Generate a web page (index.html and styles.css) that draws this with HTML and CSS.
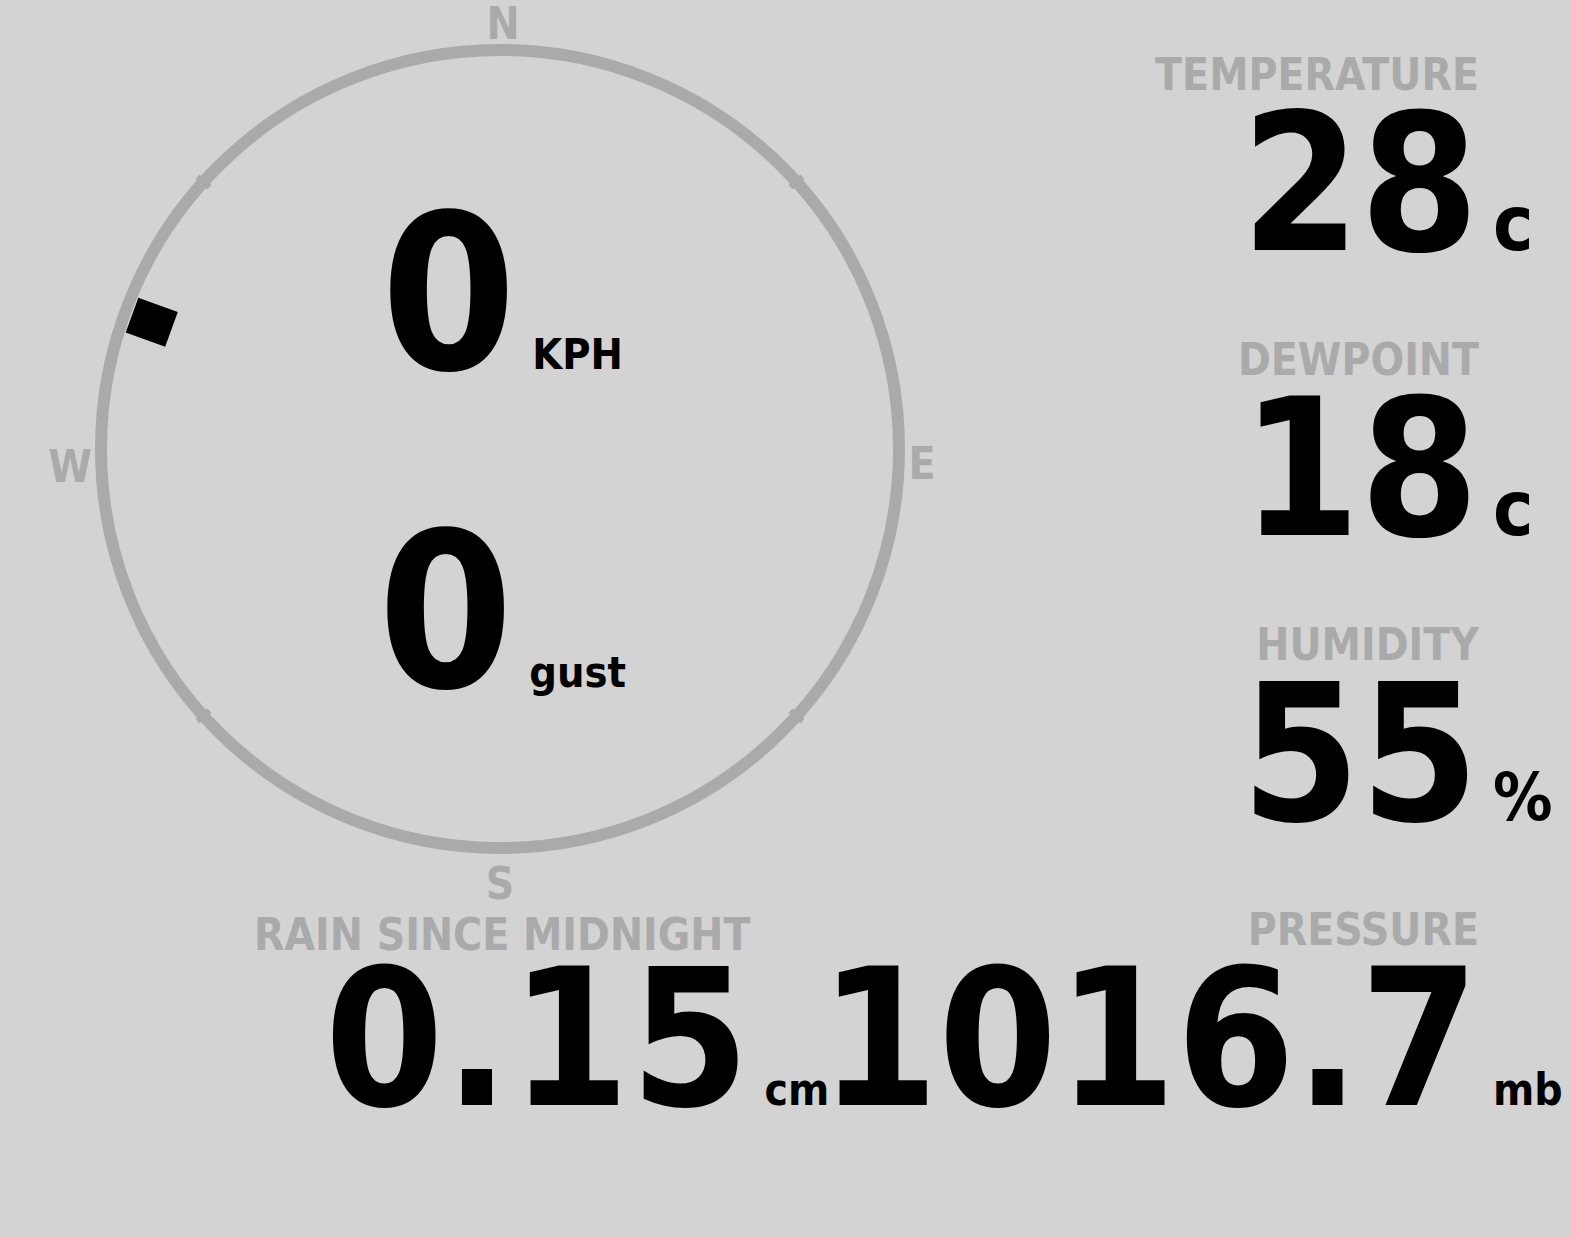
FILE: index.html
```html
<!DOCTYPE html>
<html lang="en">
<head>
<meta charset="utf-8">
<title>Weather</title>
<link rel="stylesheet" href="styles.css">
</head>
<body>
<div class="page">
  <div class="top">
    <div class="compass">
      <svg class="dial" width="1000" height="908" viewBox="0 0 1000 908">
        <circle cx="500" cy="449" r="399" fill="none" stroke="#aaaaaa" stroke-width="12"/>
        <g stroke="#aaaaaa" stroke-width="6">
          <line x1="500" y1="42" x2="500" y2="58" transform="rotate(48 500 449)"/>
          <line x1="500" y1="42" x2="500" y2="58" transform="rotate(132 500 449)"/>
          <line x1="500" y1="42" x2="500" y2="58" transform="rotate(228 500 449)"/>
          <line x1="500" y1="42" x2="500" y2="58" transform="rotate(312 500 449)"/>
        </g>
        <rect x="481.5" y="57.4" width="37" height="42" fill="#000" transform="rotate(290 500 449)"/>
        <text class="cardinal" x="503" y="39">N</text>
        <text class="cardinal" x="922" y="479">E</text>
        <text class="cardinal" x="500" y="899">S</text>
        <text class="cardinal" x="70" y="482">W</text>
      </svg>
      <div class="wind">
        <div class="wind-row">
          <span class="wind-value">0</span>
          <span class="wind-unit">KPH</span>
        </div>
        <div class="wind-row">
          <span class="wind-value">0</span>
          <span class="wind-unit">gust</span>
        </div>
      </div>
    </div>
    <div class="readings">
      <div class="reading">
        <div class="label">TEMPERATURE</div>
        <div class="value">28</div>
        <div class="unit unit-c">c</div>
      </div>
      <div class="reading">
        <div class="label">DEWPOINT</div>
        <div class="value">18</div>
        <div class="unit unit-c">c</div>
      </div>
      <div class="reading">
        <div class="label">HUMIDITY</div>
        <div class="value">55</div>
        <div class="unit unit-pct">%</div>
      </div>
    </div>
  </div>
  <div class="bottom">
    <div class="reading reading-rain">
      <div class="label">RAIN SINCE MIDNIGHT</div>
      <div class="value">0.15</div>
      <div class="unit unit-small">cm</div>
    </div>
    <div class="reading reading-pressure">
      <div class="label">PRESSURE</div>
      <div class="value">1016.7</div>
      <div class="unit unit-small">mb</div>
    </div>
  </div>
</div>
</body>
</html>
```

FILE: styles.css
```css
html, body {
  margin: 0;
  padding: 0;
  background: #d3d3d3;
}

body {
  width: 1571px;
  height: 1237px;
  overflow: hidden;
  font-family: "DejaVu Sans Condensed", "DejaVu Sans", sans-serif;
  font-stretch: condensed;
  font-weight: bold;
  color: #000;
}

.page {
  display: flex;
  flex-direction: column;
}

.top {
  display: flex;
  justify-content: space-between;
  height: 908px;
}

.compass {
  position: relative;
  width: 1000px;
  height: 908px;
  flex: none;
}

.dial {
  position: absolute;
  left: 0;
  top: 0;
  overflow: visible;
}

.cardinal {
  font-family: "DejaVu Sans Condensed", "DejaVu Sans", sans-serif;
  font-stretch: condensed;
  font-weight: bold;
  font-size: 44px;
  fill: #aaaaaa;
  text-anchor: middle;
}

.wind {
  position: relative;
  display: flex;
  flex-direction: column;
  gap: 145px;
  padding-top: 209px;
}

.wind-row {
  display: flex;
  align-items: baseline;
  justify-content: center;
  gap: 16px;
  padding-left: 4px;
}

.wind-value {
  font-size: 216px;
  line-height: 0.8;
}

.wind-unit {
  font-size: 43px;
  line-height: 1;
}

.readings {
  display: flex;
  flex-direction: column;
  align-items: flex-end;
  gap: 77px;
  padding-top: 53px;
}

.reading {
  display: grid;
  grid-template-columns: auto 78px;
  column-gap: 14px;
  flex: none;
  white-space: nowrap;
}

.label {
  grid-column: 1;
  grid-row: 1;
  justify-self: end;
  font-size: 44px;
  line-height: 44px;
  color: #aaaaaa;
  margin-bottom: 12px;
}

.value {
  grid-column: 1;
  grid-row: 2;
  justify-self: end;
  align-self: baseline;
  font-size: 190px;
  line-height: 152px;
}

.unit {
  grid-column: 2;
  grid-row: 2;
  align-self: baseline;
  line-height: 0.8;
}

.unit-c {
  font-size: 76px;
}

.unit-pct {
  font-size: 66px;
}

.unit-small {
  font-size: 44px;
}

.bottom {
  display: grid;
  grid-template-columns: minmax(0, 1fr) auto;
  align-items: start;
  padding-left: 254px;
}

.reading-rain {
  grid-template-columns: auto auto;
  column-gap: 14px;
  justify-self: start;
}

.reading-rain .label {
  margin-top: 5px;
  margin-bottom: 7px;
}

.reading-rain .value {
  letter-spacing: 1px;
}

.reading-pressure {
  justify-self: end;
}
```
